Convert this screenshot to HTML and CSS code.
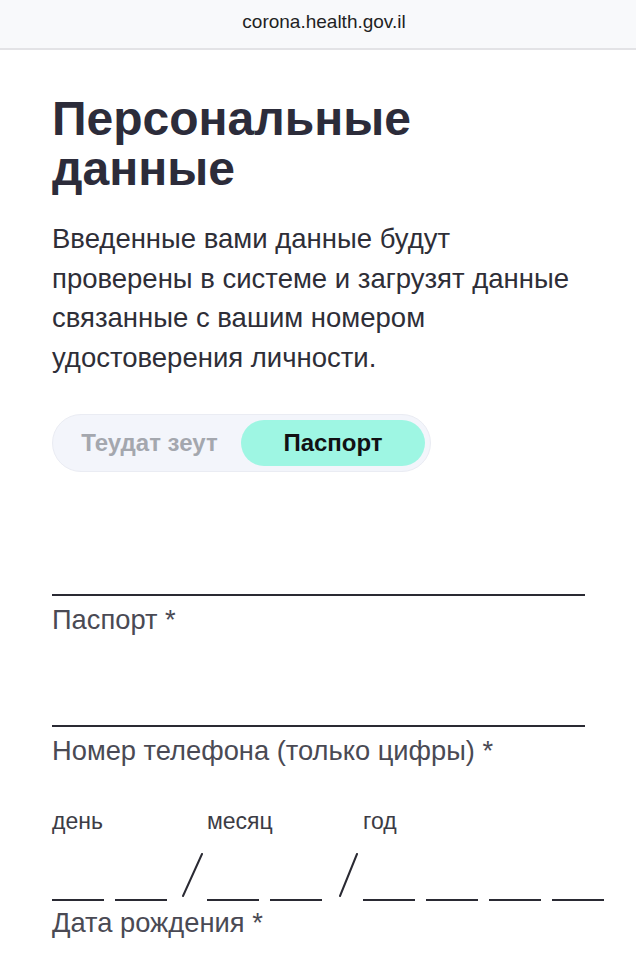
FILE: index.html
```html
<!DOCTYPE html>
<html lang="ru">
<head>
<meta charset="utf-8">
<title>Персональные данные</title>
<link rel="stylesheet" href="styles.css">
</head>
<body>
<header class="urlbar"><span class="url">corona.health.gov.il</span></header>
<main class="content">
  <h1 class="title">Персональные данные</h1>
  <p class="intro">Введенные вами данные будут проверены в системе и загрузят данные связанные с вашим номером удостоверения личности.</p>
  <div class="toggle">
    <span class="toggle-opt">Теудат зеут</span>
    <span class="toggle-opt active">Паспорт</span>
  </div>
  <div class="field first">
    <div class="field-line"></div>
    <label class="field-label">Паспорт *</label>
  </div>
  <div class="field">
    <div class="field-line"></div>
    <label class="field-label">Номер телефона (только цифры) *</label>
  </div>
  <div class="date">
    <div class="date-group">
      <span class="date-cap">день</span>
      <div class="date-slots"><span class="slot"></span><span class="slot"></span></div>
    </div>
    <svg class="slash" width="40" height="48" viewBox="0 0 40 48"><line x1="16" y1="43" x2="35" y2="1" stroke="#2a2a33" stroke-width="2" stroke-linecap="round"/></svg>
    <div class="date-group">
      <span class="date-cap">месяц</span>
      <div class="date-slots"><span class="slot"></span><span class="slot"></span></div>
    </div>
    <svg class="slash" width="41" height="48" viewBox="0 0 41 48"><line x1="18" y1="43" x2="35" y2="1" stroke="#2a2a33" stroke-width="2" stroke-linecap="round"/></svg>
    <div class="date-group">
      <span class="date-cap">год</span>
      <div class="date-slots"><span class="slot"></span><span class="slot"></span><span class="slot"></span><span class="slot"></span></div>
    </div>
  </div>
  <label class="field-label date-label">Дата рождения *</label>
</main>
</body>
</html>
```
FILE: styles.css
```css
* { box-sizing: border-box; }
html, body { margin: 0; padding: 0; background: #ffffff; }
body {
  font-family: "Liberation Sans", Arial, sans-serif;
  color: #2b2b36;
  width: 636px;
  height: 960px;
  overflow: hidden;
}
.urlbar {
  height: 50px;
  padding-left: 12px;
  background: #f8f9fb;
  border-bottom: 2px solid #e3e3e6;
  display: flex;
  align-items: center;
  justify-content: center;
}
.url {
  font-size: 19px;
  color: #1f1f24;
  margin-top: -5px;
}
.content {
  padding: 0 51px 0 52px;
}
.title {
  margin: 44px 0 0;
  font-size: 48px;
  line-height: 50px;
  font-weight: 700;
  color: #2c2c3a;
}
.intro {
  margin: 25px 0 0;
  font-size: 27.5px;
  line-height: 39.5px;
  color: #2e2e37;
}
.toggle {
  margin-top: 37px;
  display: flex;
  align-items: center;
  width: 379px;
  height: 58px;
  padding: 5px;
  background: #f3f5fb;
  border: 1px solid #eaecf3;
  border-radius: 29px;
}
.toggle-opt {
  flex: 1;
  height: 46px;
  border-radius: 23px;
  display: flex;
  align-items: center;
  justify-content: center;
  font-size: 24px;
  font-weight: 700;
  color: #a4a7ae;
}
.toggle-opt.active {
  flex: 0 0 184px;
  background: #9ef6e3;
  color: #111114;
}
.field { display: flex; flex-direction: column; }
.field.first { margin-top: 122px; }
.field + .field { margin-top: 89px; }
.field-line {
  height: 2px;
  background: #2a2a33;
}
.field-label {
  font-size: 27.3px;
  line-height: 32px;
  margin-top: 8px;
  color: #4a4a54;
}
.date {
  margin-top: 40px;
  display: flex;
  align-items: flex-end;
}
.date-group { display: flex; flex-direction: column; flex-shrink: 0; }
.date-cap {
  font-size: 23px;
  line-height: 28px;
  color: #3c3c45;
}
.date-slots {
  display: flex;
  gap: 11px;
  margin-top: 64px;
}
.slot {
  width: 52px;
  height: 2px;
  background: #2a2a33;
  flex-shrink: 0;
}
.slash { display: block; flex-shrink: 0; }
.date-label { display: block; margin-top: 6px; }
```
